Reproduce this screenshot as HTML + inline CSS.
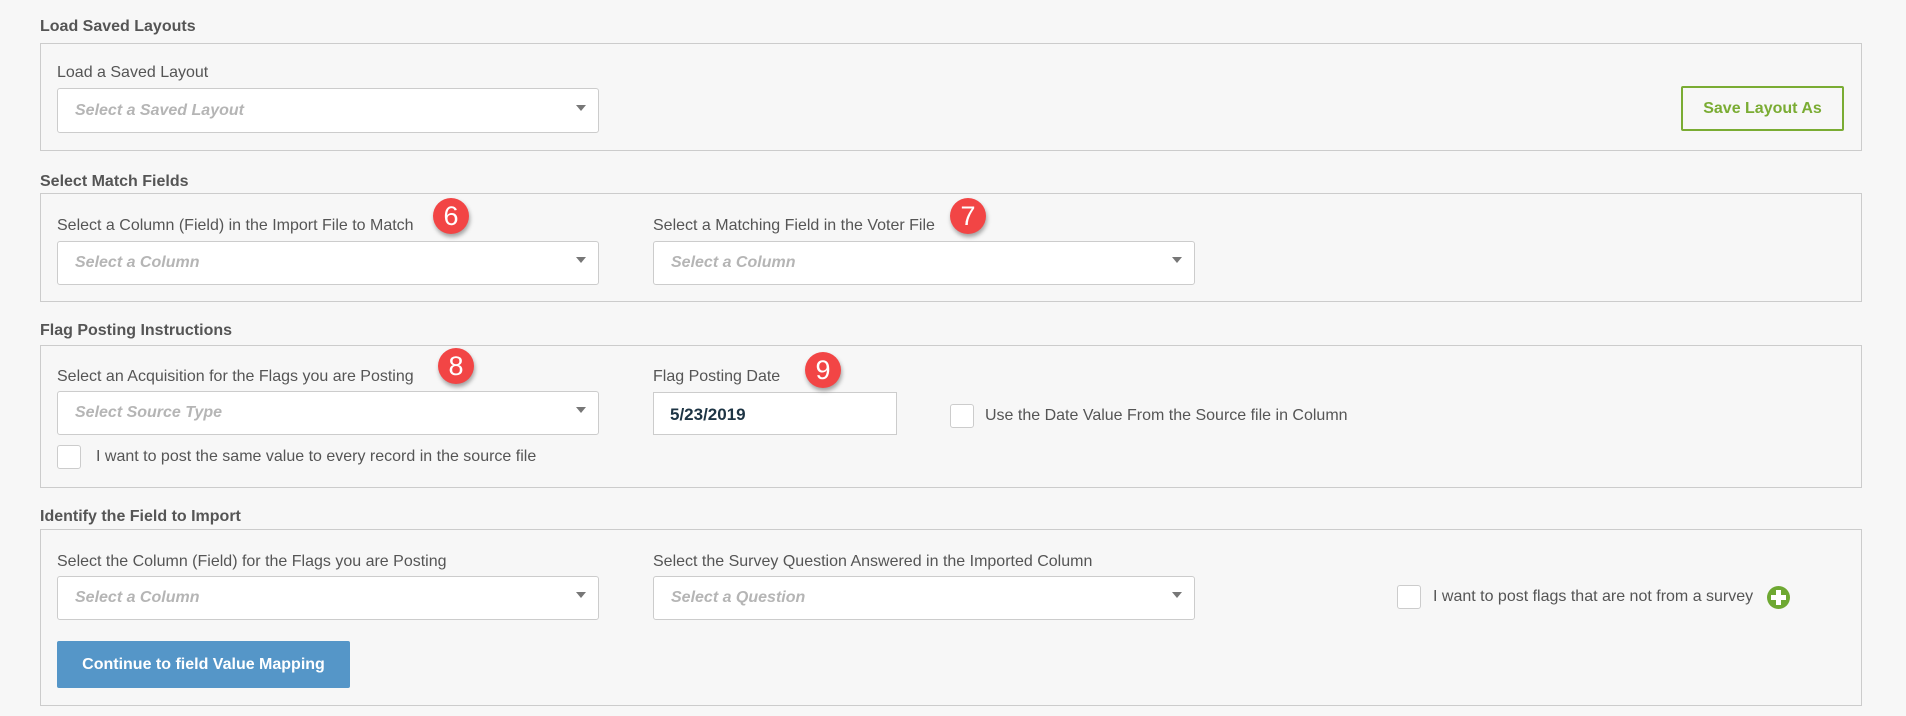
<!DOCTYPE html>
<html><head><meta charset="utf-8"><style>
body{margin:0;width:1906px;height:716px;background:#f7f7f7;font-family:"Liberation Sans",Arial,sans-serif;position:relative;overflow:hidden;color:#555}
.a{position:absolute}
.t{font-weight:bold;font-size:16px;color:#555}
.box{border:1px solid #ccc;background:#f7f7f7}
.lbl{font-size:16px;color:#555;white-space:nowrap}
.sel{background:#fff;border:1px solid #ccc;border-radius:3px;box-sizing:border-box}
.sel span{position:absolute;left:17px;top:50%;transform:translateY(-50%);font-style:italic;font-weight:bold;color:#b5b5b5;font-size:16px}
.sel i{position:absolute;right:12px;top:50%;margin-top:-6px;width:0;height:0;border-left:5px solid transparent;border-right:5px solid transparent;border-top:6px solid #777}
.cb{background:#fff;border:1px solid #ccc;border-radius:3px;box-sizing:border-box;width:24px;height:24px}
.bd{width:36px;height:36px;border-radius:50%;background:#f24545;color:#fff;font-size:27px;text-align:center;line-height:36px;box-shadow:1px 3px 4px rgba(0,0,0,.35)}
</style></head><body>
<div class="a t" style="left:40px;top:18px">Load Saved Layouts</div>
<div class="a box" style="left:40px;top:43px;width:1820px;height:106px"></div>
<div class="a lbl" style="left:57px;top:64px">Load a Saved Layout</div>
<div class="a sel" style="left:57px;top:88px;width:542px;height:45px"><span>Select a Saved Layout</span><i></i></div>
<div class="a" style="left:1681px;top:86px;width:163px;height:45px;box-sizing:border-box;border:2px solid #7aac33;border-radius:2px;color:#7aac33;font-weight:bold;font-size:16px;text-align:center;line-height:41px">Save Layout As</div>

<div class="a t" style="left:40px;top:173px">Select Match Fields</div>
<div class="a box" style="left:40px;top:193px;width:1820px;height:107px"></div>
<div class="a lbl" style="left:57px;top:217px">Select a Column (Field) in the Import File to Match</div>
<div class="a sel" style="left:57px;top:241px;width:542px;height:44px"><span>Select a Column</span><i></i></div>
<div class="a lbl" style="left:653px;top:217px">Select a Matching Field in the Voter File</div>
<div class="a sel" style="left:653px;top:241px;width:542px;height:44px"><span>Select a Column</span><i></i></div>
<div class="a bd" style="left:433px;top:198px">6</div>
<div class="a bd" style="left:950px;top:198px">7</div>

<div class="a t" style="left:40px;top:322px">Flag Posting Instructions</div>
<div class="a box" style="left:40px;top:345px;width:1820px;height:141px"></div>
<div class="a lbl" style="left:57px;top:368px">Select an Acquisition for the Flags you are Posting</div>
<div class="a sel" style="left:57px;top:391px;width:542px;height:44px"><span>Select Source Type</span><i></i></div>
<div class="a cb" style="left:57px;top:445px"></div>
<div class="a lbl" style="left:96px;top:448px">I want to post the same value to every record in the source file</div>
<div class="a lbl" style="left:653px;top:368px">Flag Posting Date</div>
<div class="a" style="left:653px;top:392px;width:244px;height:43px;background:#fff;border:1px solid #ccc;box-sizing:border-box;font-weight:bold;font-size:17px;color:#1d3444;padding:12px 0 0 16px">5/23/2019</div>
<div class="a cb" style="left:950px;top:404px"></div>
<div class="a lbl" style="left:985px;top:407px">Use the Date Value From the Source file in Column</div>
<div class="a bd" style="left:438px;top:348px">8</div>
<div class="a bd" style="left:805px;top:352px">9</div>

<div class="a t" style="left:40px;top:508px">Identify the Field to Import</div>
<div class="a box" style="left:40px;top:529px;width:1820px;height:175px"></div>
<div class="a lbl" style="left:57px;top:553px">Select the Column (Field) for the Flags you are Posting</div>
<div class="a sel" style="left:57px;top:576px;width:542px;height:44px"><span>Select a Column</span><i></i></div>
<div class="a lbl" style="left:653px;top:553px">Select the Survey Question Answered in the Imported Column</div>
<div class="a sel" style="left:653px;top:576px;width:542px;height:44px"><span>Select a Question</span><i></i></div>
<div class="a cb" style="left:1397px;top:585px"></div>
<div class="a lbl" style="left:1433px;top:588px">I want to post flags that are not from a survey</div>
<div class="a" style="left:1767px;top:586px;width:23px;height:23px;border-radius:50%;background:#6ea832"><div class="a" style="left:9px;top:4px;width:5px;height:15px;background:#fff"></div><div class="a" style="left:4px;top:9px;width:15px;height:5px;background:#fff"></div></div>
<div class="a" style="left:57px;top:641px;width:293px;height:47px;background:#5596c8;border-radius:2px;color:#fff;font-weight:bold;font-size:16px;text-align:center;line-height:47px">Continue to field Value Mapping</div>
</body></html>
